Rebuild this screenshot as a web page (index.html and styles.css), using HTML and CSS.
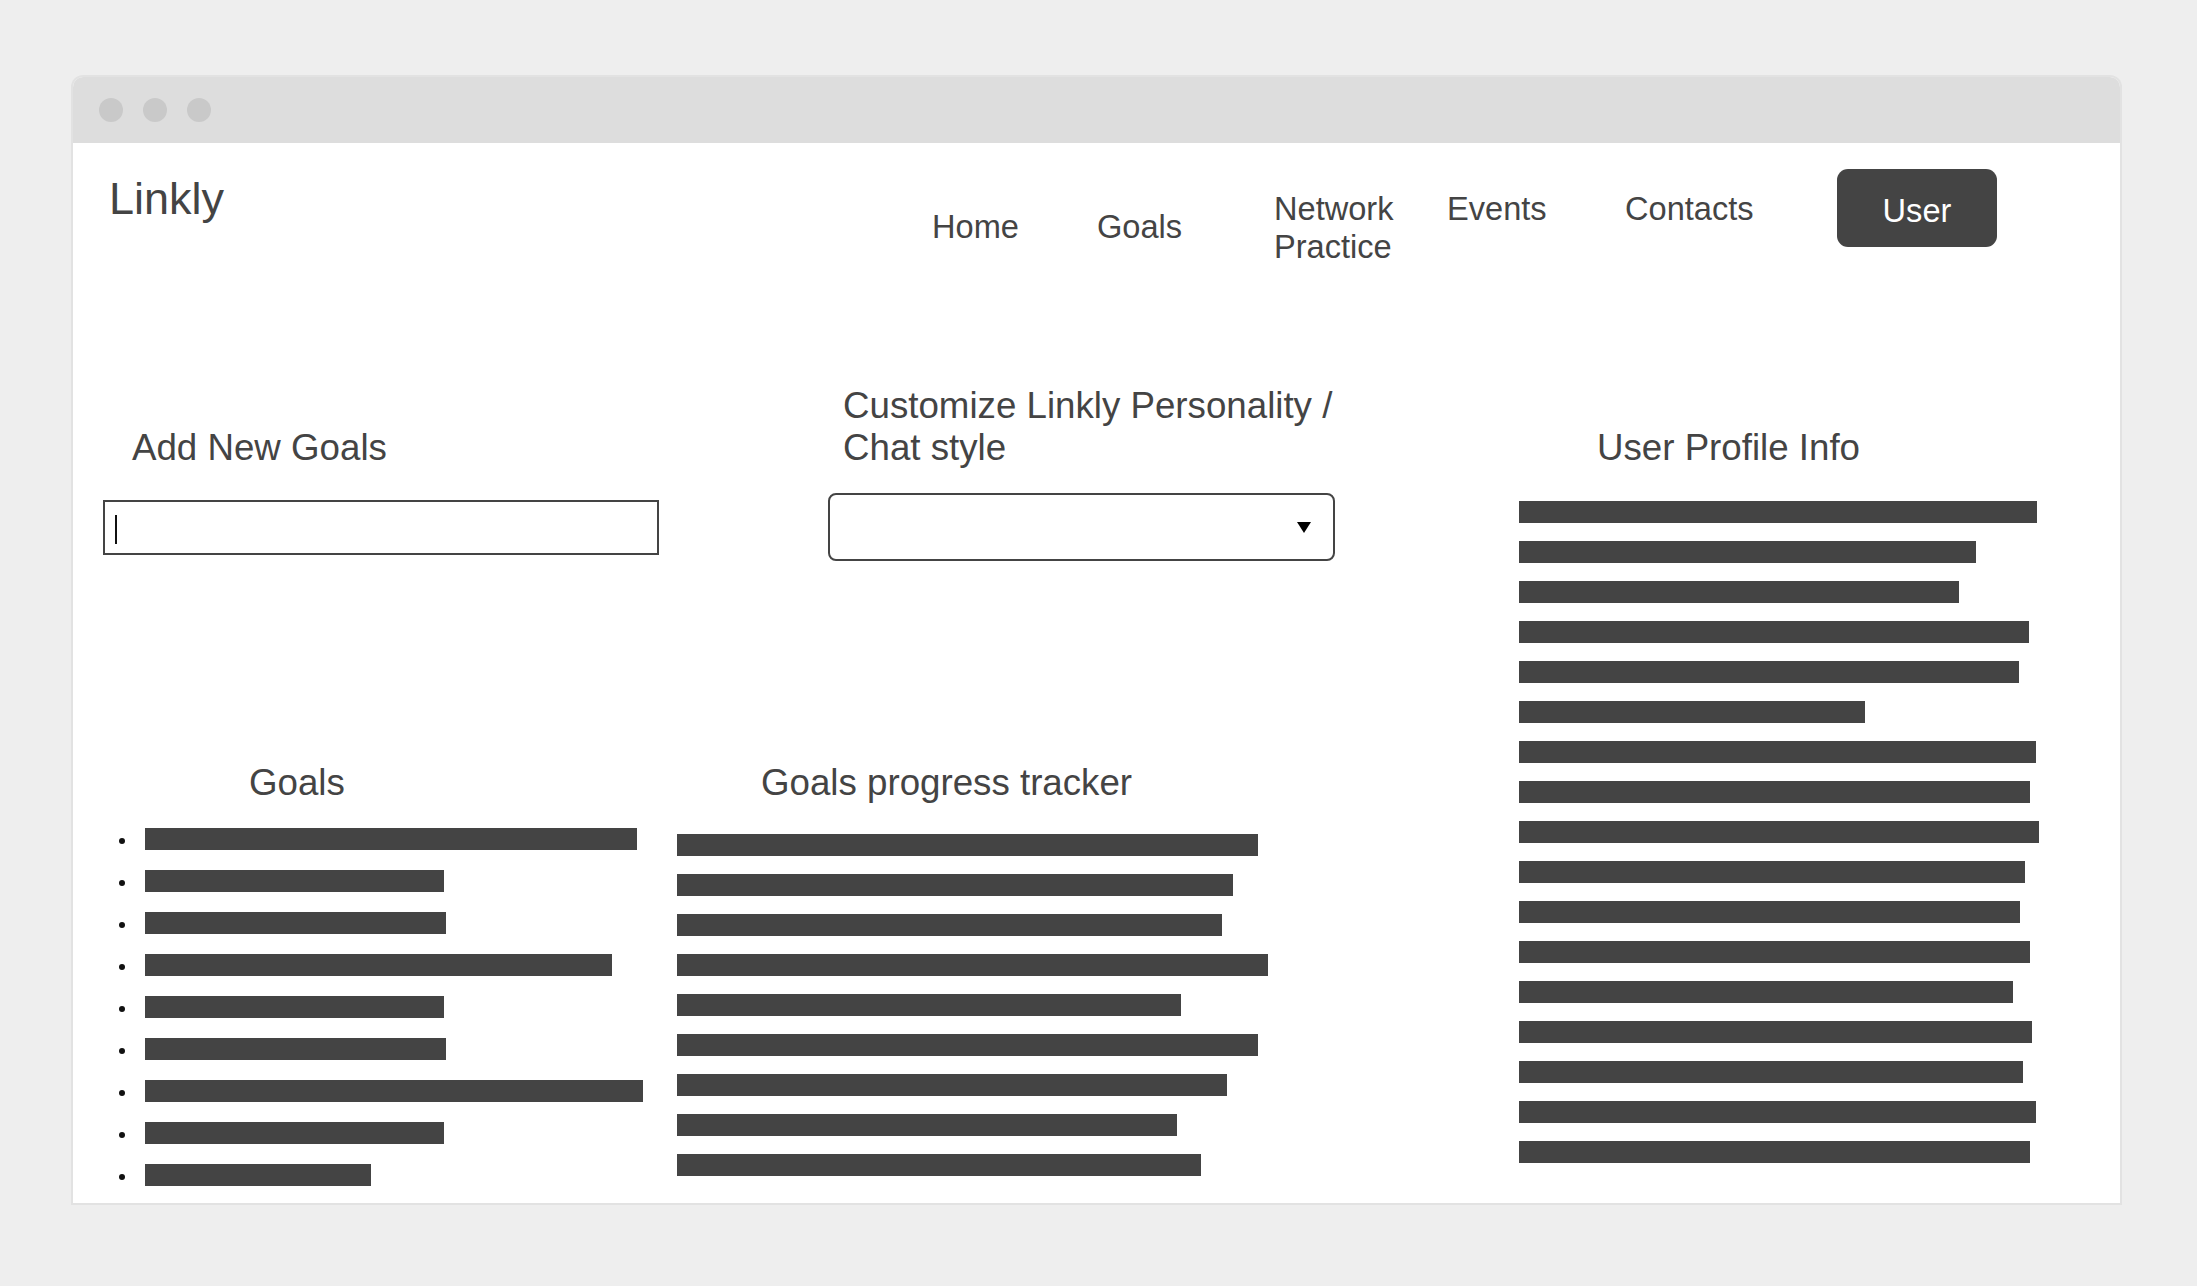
FILE: index.html
```html
<!DOCTYPE html>
<html lang="en">
<head>
<meta charset="utf-8">
<title>Linkly</title>
<link rel="stylesheet" href="styles.css">
</head>
<body>
<div class="window">
  <div class="titlebar">
    <span class="dot"></span><span class="dot"></span><span class="dot"></span>
  </div>
  <header class="header">
    <div class="logo">Linkly</div>
    <nav class="nav">
      <div class="nav-item mid w-home">Home</div>
      <div class="nav-item mid w-goals">Goals</div>
      <div class="nav-item w-network">Network<br>Practice</div>
      <div class="nav-item w-events">Events</div>
      <div class="nav-item w-contacts">Contacts</div>
      <div class="user-btn">User</div>
    </nav>
  </header>
  <main class="main">
    <div class="left">
      <div class="row1">
        <section class="add-block">
          <h2 class="heading add-heading">Add New Goals</h2>
          <div class="text-input"><span class="caret"></span></div>
        </section>
        <section class="custom-block">
          <h2 class="heading custom-heading">Customize Linkly Personality /<br>Chat style</h2>
          <div class="select"><span class="arrow"></span></div>
        </section>
      </div>
      <div class="row2">
        <section class="goals-block">
          <h2 class="heading goals-heading">Goals</h2>
          <ul class="goal-list">
            <li><span class="bar" style="width:492px"></span></li>
            <li><span class="bar" style="width:299px"></span></li>
            <li><span class="bar" style="width:301px"></span></li>
            <li><span class="bar" style="width:467px"></span></li>
            <li><span class="bar" style="width:299px"></span></li>
            <li><span class="bar" style="width:301px"></span></li>
            <li><span class="bar" style="width:498px"></span></li>
            <li><span class="bar" style="width:299px"></span></li>
            <li><span class="bar" style="width:226px"></span></li>
          </ul>
        </section>
        <section class="tracker-block">
          <h2 class="heading tracker-heading">Goals progress tracker</h2>
          <div class="bar-stack tracker-bars">
            <span class="bar" style="width:581px"></span>
            <span class="bar" style="width:556px"></span>
            <span class="bar" style="width:545px"></span>
            <span class="bar" style="width:591px"></span>
            <span class="bar" style="width:504px"></span>
            <span class="bar" style="width:581px"></span>
            <span class="bar" style="width:550px"></span>
            <span class="bar" style="width:500px"></span>
            <span class="bar" style="width:524px"></span>
          </div>
        </section>
      </div>
    </div>
    <section class="profile">
      <h2 class="heading profile-heading">User Profile Info</h2>
      <div class="bar-stack profile-bars">
        <span class="bar" style="width:518px"></span>
        <span class="bar" style="width:457px"></span>
        <span class="bar" style="width:440px"></span>
        <span class="bar" style="width:510px"></span>
        <span class="bar" style="width:500px"></span>
        <span class="bar" style="width:346px"></span>
        <span class="bar" style="width:517px"></span>
        <span class="bar" style="width:511px"></span>
        <span class="bar" style="width:520px"></span>
        <span class="bar" style="width:506px"></span>
        <span class="bar" style="width:501px"></span>
        <span class="bar" style="width:511px"></span>
        <span class="bar" style="width:494px"></span>
        <span class="bar" style="width:513px"></span>
        <span class="bar" style="width:504px"></span>
        <span class="bar" style="width:517px"></span>
        <span class="bar" style="width:511px"></span>
      </div>
    </section>
  </main>
</div>
</body>
</html>
```

FILE: styles.css
```css
html, body {
  margin: 0;
  padding: 0;
}
body {
  background: #eeeeee;
  height: 1286px;
  overflow: hidden;
  font-family: "Liberation Sans", Arial, sans-serif;
  color: #444444;
}
.window {
  margin: 77px 0 0 73px;
  width: 2047px;
  height: 1126px;
  background: #ffffff;
  border-radius: 10px 10px 0 0;
  box-shadow: 0 0 0 2px #e2e2e2;
  overflow: hidden;
}
.titlebar {
  height: 66px;
  background: #dddddd;
  display: flex;
  align-items: center;
  gap: 20px;
  padding-left: 26px;
  box-sizing: border-box;
}
.dot {
  width: 24px;
  height: 24px;
  border-radius: 50%;
  background: #c9c9c9;
}
.header {
  display: flex;
  align-items: flex-start;
  height: 104px;
  box-sizing: border-box;
  padding-top: 26px;
  padding-left: 36px;
}
.logo {
  font-size: 45px;
  margin-top: 4px;
  line-height: normal;
}
.nav {
  margin-left: auto;
  padding-right: 123px;
  display: flex;
  align-items: flex-start;
  font-size: 32.6px;
}
.nav-item {
  margin-top: 21px;
  line-height: 38px;
}
.nav-item.mid {
  margin-top: 39px;
}
.w-home { width: 165px; }
.w-goals { width: 177px; }
.w-network { width: 173px; }
.w-events { width: 178px; }
.w-contacts { width: 212px; }
.user-btn {
  width: 160px;
  height: 78px;
  box-sizing: border-box;
  padding-top: 5px;
  border-radius: 11px;
  background: #444444;
  color: #ffffff;
  display: flex;
  align-items: center;
  justify-content: center;
}
.main {
  display: flex;
  margin-top: 138px;
}
.left {
  width: 1446px;
  flex: none;
}
.heading {
  margin: 0;
  font-size: 36.7px;
  font-weight: normal;
  line-height: 42px;
}
.row1 {
  display: flex;
  align-items: flex-start;
}
.add-block {
  margin-left: 30px;
  width: 556px;
  padding-top: 42px;
}
.add-heading {
  padding-left: 29px;
}
.text-input {
  margin-top: 31px;
  height: 55px;
  box-sizing: border-box;
  border: 2px solid #444444;
  display: flex;
  align-items: center;
}
.caret {
  display: block;
  width: 2px;
  height: 29px;
  margin-left: 10px;
  margin-top: 3px;
  background: #111111;
}
.custom-block {
  margin-left: 169px;
  width: 507px;
}
.custom-heading {
  padding-left: 15px;
}
.select {
  margin-top: 24px;
  height: 68px;
  box-sizing: border-box;
  border: 2px solid #444444;
  border-radius: 8px;
  display: flex;
  align-items: center;
  justify-content: flex-end;
  padding-right: 22px;
}
.arrow {
  width: 0;
  height: 0;
  border-left: 7px solid transparent;
  border-right: 7px solid transparent;
  border-top: 11px solid #000000;
}
.row2 {
  display: flex;
  align-items: flex-start;
  margin-top: 201px;
}
.goals-block {
  width: 604px;
  flex: none;
}
.goals-heading {
  padding-left: 176px;
}
.goal-list {
  list-style: none;
  margin: 14px 0 0 0;
  padding: 0 0 0 46px;
}
.goal-list li {
  height: 42px;
  display: flex;
  align-items: center;
}
.goal-list li::before {
  content: "";
  width: 6px;
  height: 6px;
  border-radius: 50%;
  background: #111111;
  margin-top: 4px;
  flex: none;
}
.goal-list .bar {
  margin-left: 20px;
}
.bar {
  display: block;
  height: 22px;
  background: #444444;
  flex: none;
}
.bar-stack {
  display: flex;
  flex-direction: column;
  gap: 18px;
}
.tracker-heading {
  padding-left: 84px;
}
.tracker-bars {
  margin-top: 30px;
}
.profile {
  padding-top: 42px;
}
.profile-heading {
  padding-left: 78px;
}
.profile-bars {
  margin-top: 32px;
}
```
